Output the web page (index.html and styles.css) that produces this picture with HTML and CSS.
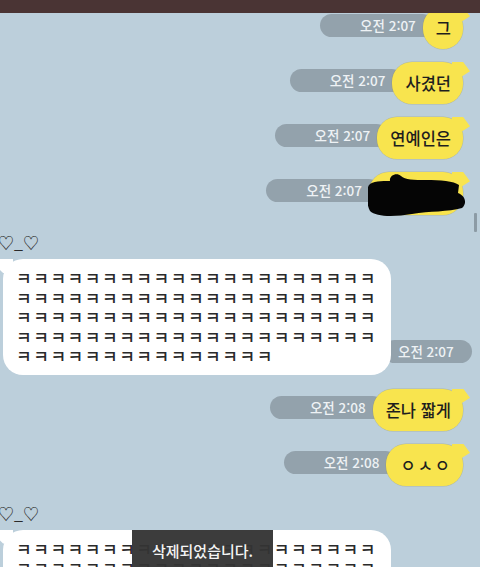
FILE: index.html
```html
<!DOCTYPE html>
<html lang="ko">
<head>
<meta charset="utf-8">
<link rel="stylesheet" href="styles.css">
</head>
<body>
<div class="screen">
  <div class="topbar"></div>
  <div class="chat">
    <div class="row sent">
      <span class="time">오전 2:07</span>
      <div class="bubble yellow">그</div>
    </div>
    <div class="row sent">
      <span class="time">오전 2:07</span>
      <div class="bubble yellow">사겼던</div>
    </div>
    <div class="row sent">
      <span class="time">오전 2:07</span>
      <div class="bubble yellow">연예인은</div>
    </div>
    <div class="row sent">
      <span class="time">오전 2:07</span>
      <div class="bubble yellow redacted-bubble">
        <span class="redacted">&nbsp;</span>
        <svg class="scribble" viewBox="0 0 98 44" width="98" height="44" aria-hidden="true">
          <path d="M1,12 C4,8 14,8 22,8 C21,2 29,-1 33,3 C37,7 46,7 58,7 C72,7 86,8 91,12 L90,20 C98,23 99,31 94,35 C80,39 62,38 44,41 C26,44 8,44 2,38 C-2,31 -2,17 1,12 Z" fill="#050505"/>
        </svg>
      </div>
    </div>

    <div class="name">♡_♡</div>
    <div class="row received">
      <div class="bubble white">ㅋㅋㅋㅋㅋㅋㅋㅋㅋㅋㅋㅋㅋㅋㅋㅋㅋㅋㅋㅋㅋ<br>ㅋㅋㅋㅋㅋㅋㅋㅋㅋㅋㅋㅋㅋㅋㅋㅋㅋㅋㅋㅋㅋ<br>ㅋㅋㅋㅋㅋㅋㅋㅋㅋㅋㅋㅋㅋㅋㅋㅋㅋㅋㅋㅋㅋ<br>ㅋㅋㅋㅋㅋㅋㅋㅋㅋㅋㅋㅋㅋㅋㅋㅋㅋㅋㅋㅋㅋ<br>ㅋㅋㅋㅋㅋㅋㅋㅋㅋㅋㅋㅋㅋㅋㅋ</div>
      <span class="time">오전 2:07</span>
    </div>

    <div class="row sent">
      <span class="time">오전 2:08</span>
      <div class="bubble yellow">존나 짧게</div>
    </div>
    <div class="row sent">
      <span class="time">오전 2:08</span>
      <div class="bubble yellow jamo">ㅇㅅㅇ</div>
    </div>

    <div class="name">♡_♡</div>
    <div class="row received">
      <div class="bubble white">ㅋㅋㅋㅋㅋㅋㅋㅋㅋㅋㅋㅋㅋㅋㅋㅋㅋㅋㅋㅋㅋ<br>ㅋㅋㅋㅋㅋㅋㅋㅋㅋㅋㅋㅋㅋㅋㅋㅋㅋㅋㅋㅋㅋ<br>ㅋㅋㅋㅋㅋㅋㅋㅋㅋㅋㅋㅋㅋㅋㅋㅋㅋㅋㅋㅋㅋ</div>
    </div>
  </div>
  <div class="scrollbar"></div>
  <div class="toast">삭제되었습니다.</div>
</div>
</body>
</html>
```

FILE: styles.css
```css
* { box-sizing: border-box; }

html, body {
  margin: 0;
  padding: 0;
}

body {
  background: #bccfdb;
  font-family: "Noto Sans CJK KR", "Noto Sans", sans-serif;
  color: #1e1e1e;
}

.screen {
  position: relative;
  width: 480px;
  height: 567px;
  overflow: hidden;
  background: #bccfdb;
}

.topbar {
  position: absolute;
  top: 0;
  left: 0;
  right: 0;
  height: 13px;
  background: #4a3434;
  z-index: 5;
}

.chat {
  display: flex;
  flex-direction: column;
  padding: 7px 17px 0 0;
}

.row {
  display: flex;
  margin-bottom: 13px;
}

.row.sent {
  justify-content: flex-end;
  align-items: flex-start;
}

.row.received {
  justify-content: flex-start;
  align-items: flex-end;
  margin-bottom: 14px;
}

.time {
  display: block;
  height: 23px;
  line-height: 23px;
  border-radius: 12px;
  background: #93a2ac;
  color: #eef2f5;
  font-size: 13.5px;
  font-weight: 500;
  white-space: nowrap;
  position: relative;
  z-index: 0;
}

.sent .time {
  margin-top: 7px;
  padding: 0 18px 0 40px;
  margin-right: -11px;
}

.received .time {
  margin-bottom: 12px;
  margin-left: -8px;
  padding: 0 18px 0 15px;
}

.bubble {
  position: relative;
  z-index: 1;
  border-radius: 20px;
  font-size: 16.5px;
  font-weight: 500;
}

.bubble.yellow {
  background: #f8e44e;
  padding: 10px 12px 10px 13px;
  line-height: 22px;
  box-shadow: 0 0 0 0.5px rgba(150, 140, 60, 0.35);
}

.bubble.yellow.jamo {
  letter-spacing: 2px;
  padding: 10px 11px 10px 14px;
}

.bubble.yellow::after {
  content: "";
  position: absolute;
  top: 0;
  right: -7px;
  width: 18px;
  height: 15px;
  background: #f8e44e;
  clip-path: polygon(0 0, 62% 0, 100% 62%, 50% 100%, 0 100%);
}

.bubble.white {
  background: #ffffff;
  margin-left: 3px;
  padding: 9px 14px 9px 13px;
  font-size: 17px;
  font-weight: 500;
  line-height: 19.5px;
  letter-spacing: 1.55px;
  white-space: nowrap;
  color: #2a2a2a;
}

.bubble.white::before {
  content: "";
  position: absolute;
  top: 0;
  left: -8px;
  width: 18px;
  height: 14px;
  background: #ffffff;
  clip-path: polygon(0 0, 100% 0, 100% 100%, 45% 100%, 0 45%);
}

.redacted-bubble {
  width: 94px;
  height: 43px;
}

.redacted {
  display: inline-block;
  width: 60px;
}

.scribble {
  position: absolute;
  left: -1px;
  top: 1px;
  z-index: 2;
}

.name {
  font-size: 16px;
  line-height: 22px;
  color: #2a2a2a;
  margin: 3px 0 6px -2px;
}

.scrollbar {
  position: absolute;
  left: 474px;
  top: 213px;
  width: 3px;
  height: 19px;
  background: #8c9ba5;
  border-radius: 1px;
}

.toast {
  position: absolute;
  left: 132px;
  top: 530px;
  width: 141px;
  height: 44px;
  padding-top: 10px;
  background: rgba(52, 52, 52, 0.96);
  color: #f4f4f4;
  font-size: 15px;
  font-weight: 500;
  line-height: 22px;
  text-align: center;
  z-index: 6;
}
```
